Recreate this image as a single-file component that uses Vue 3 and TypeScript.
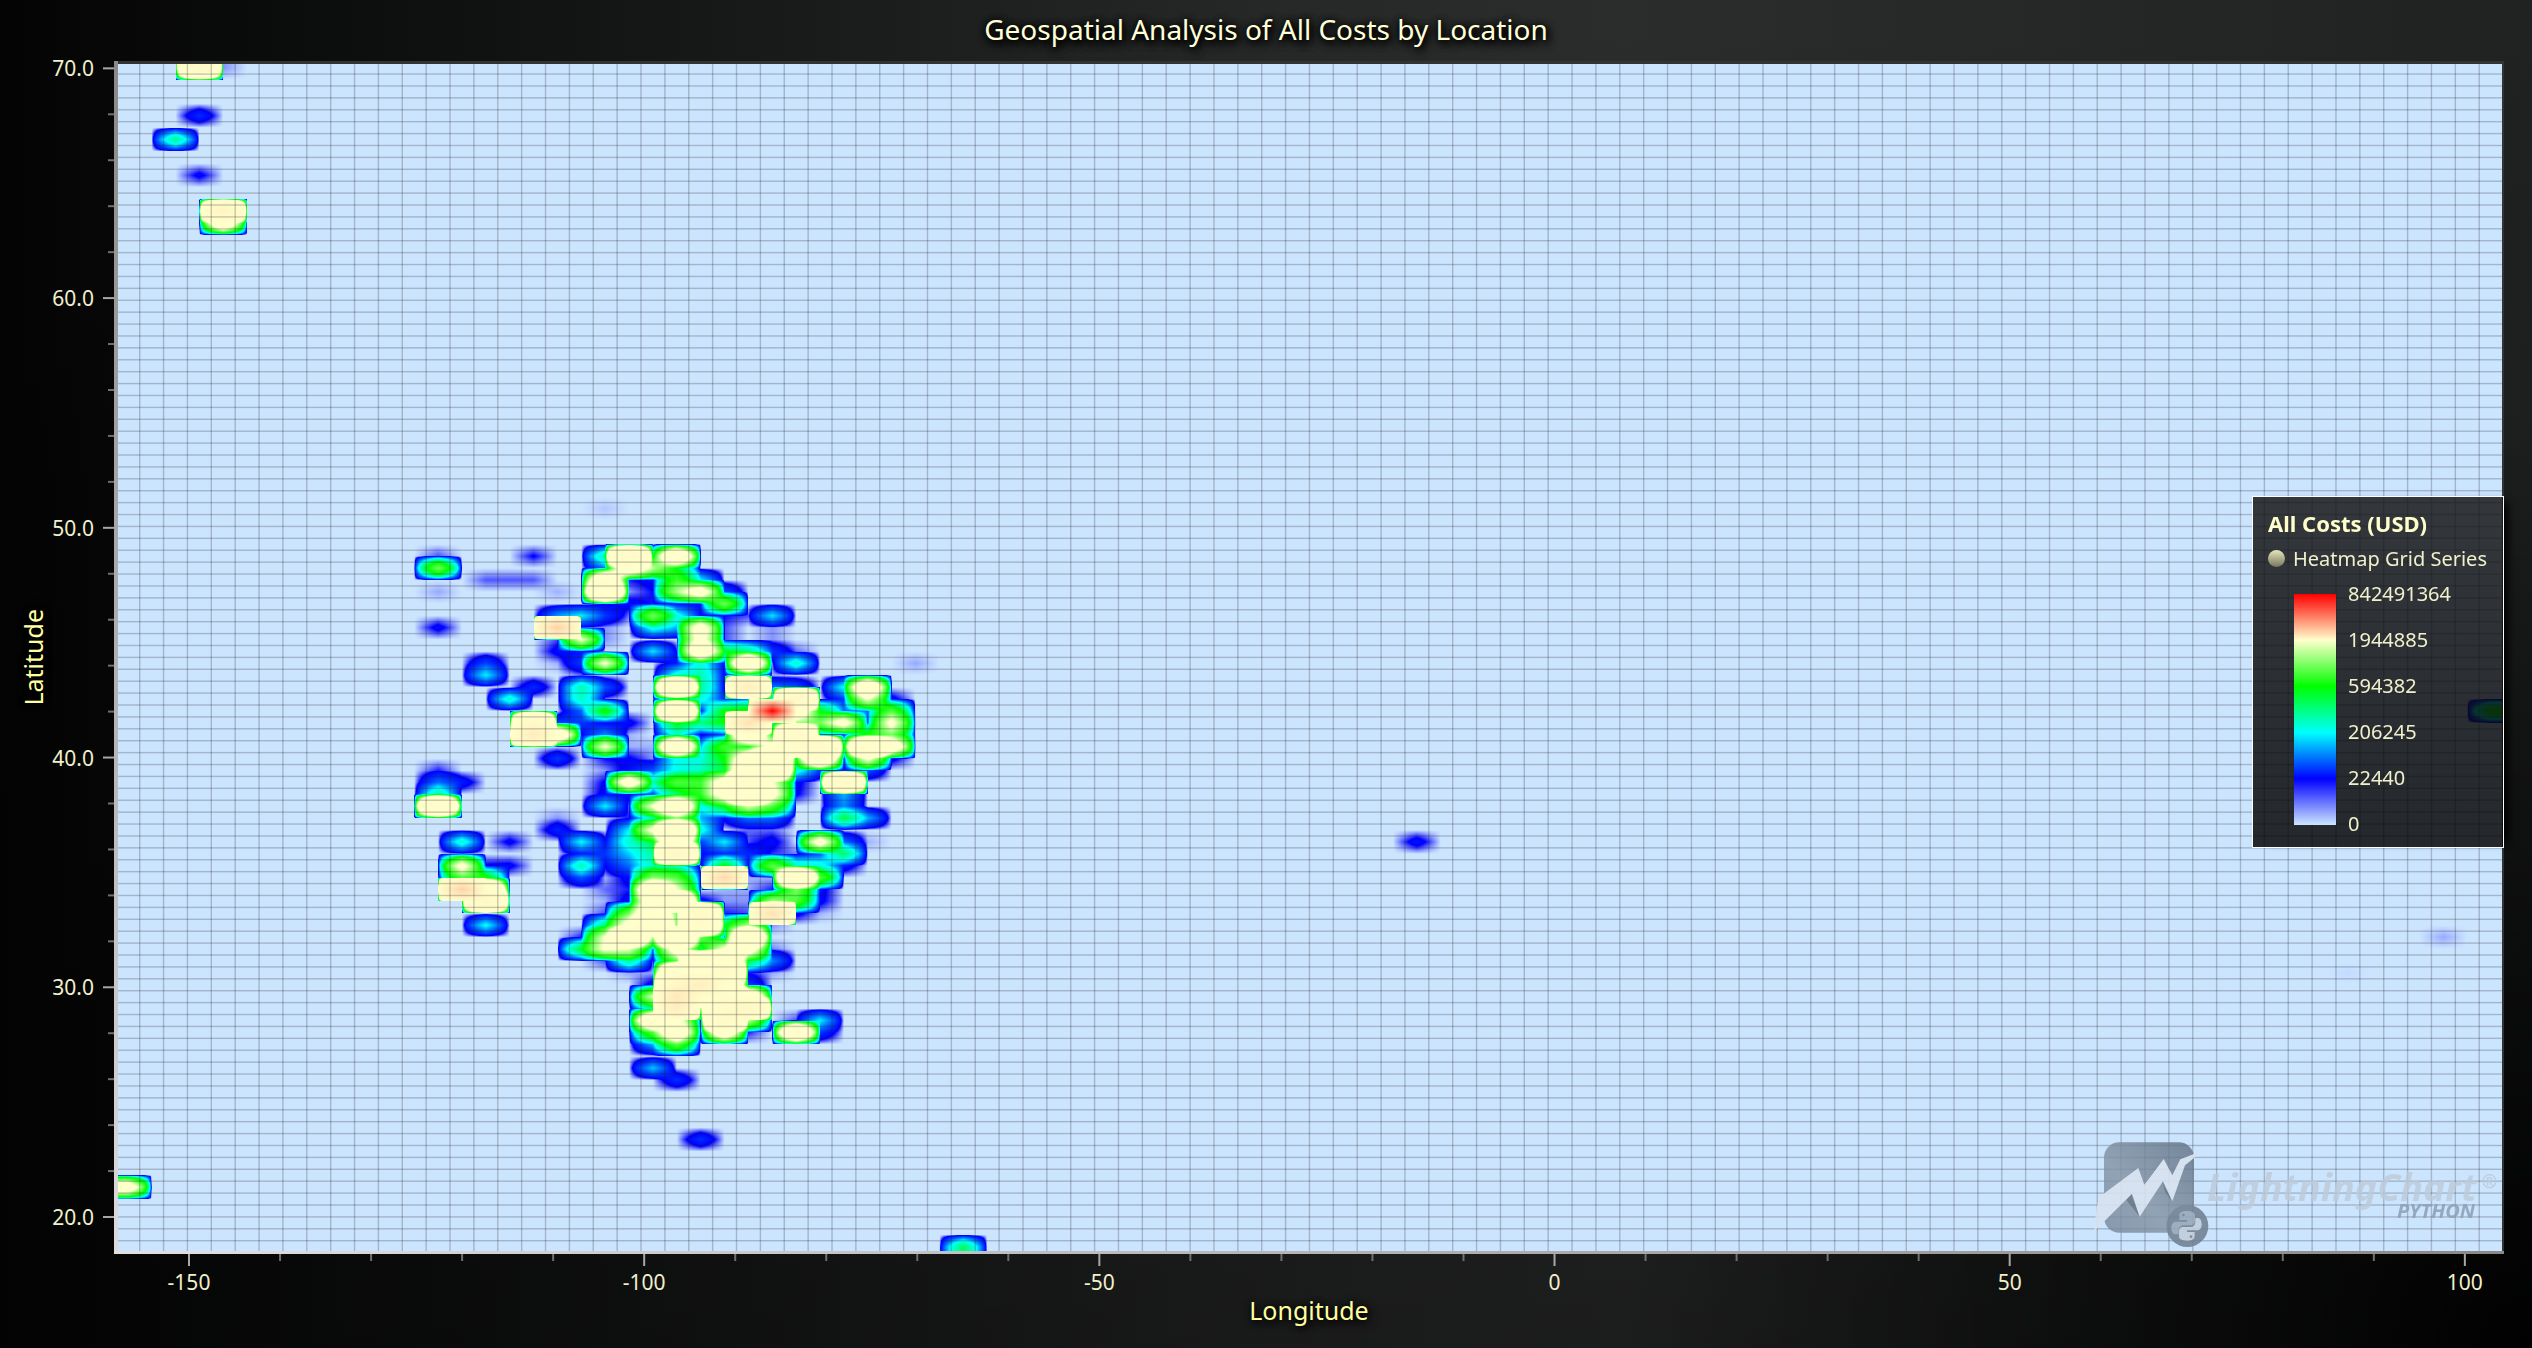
<script setup lang="ts">
import { onBeforeUnmount, onMounted, ref } from 'vue'

type Rgb = [number, number, number]
interface Stop { value: number; label: string; color: Rgb }

// Visible span of both axes and the span covered by the heatmap cells
const axisX = { min: -158.24, max: 104.3 }
const axisY = { min: 18.39, max: 70.32 }
const cellsX = { min: -158.04, max: 104.2 }
const cellsY = { min: 18.45, max: 70.27 }
const COLUMNS = 100
const ROWS = 100

const stops: Stop[] = [
  { value: 0, label: '0', color: [204, 229, 255] },
  { value: 22440, label: '22440', color: [0, 0, 255] },
  { value: 206245, label: '206245', color: [0, 255, 255] },
  { value: 594382, label: '594382', color: [0, 255, 0] },
  { value: 1944885, label: '1944885', color: [255, 255, 204] },
  { value: 842491364, label: '842491364', color: [255, 0, 0] },
]
const legendStops = [...stops].reverse()

// Costs in thousands of dollars: row from the north, then column:cost pairs
const costs: Record<number, string> = {
  0: '3:24000 4:8',
  4: '3:51',
  6: '2:376',
  9: '3:28',
  12: '4:40000',
  13: '4:4400',
  37: '20:3',
  41: '13:15 17:24 20:350 21:21000 22:450 23:5000',
  42: '13:1200 20:100 21:3600 22:1600 23:550',
  43: '15:14 16:14 17:14 20:5000 21:20 22:30 23:900 24:200',
  44: '13:6 18:5 20:10000 21:8 22:22 23:1500 24:2900 25:80',
  45: '20:22 21:30 22:20 23:30 24:30 25:1200',
  46: '18:130 19:200 20:60 21:10 22:1200 23:250 24:30 25:22 26:15 27:190',
  47: '13:30 18:150000 19:15 20:8 22:250 23:150 24:2800 25:15 27:8',
  48: '18:15 19:1950 20:8 24:2500 25:15 27:8',
  49: '18:30 19:35 22:190 23:20 24:3900 25:550 26:400 27:60 28:12',
  50: '15:70 18:5 19:60 20:2050 23:40 24:250 25:20 26:5500 27:10 28:280 33:6',
  51: '15:200 19:10 23:250 24:330 25:20 26:30 27:5',
  52: '17:50 19:320 20:80 23:13000 24:370 25:20 26:60000 27:100 28:80 30:220 31:4500',
  53: '16:270 19:300 20:10 23:100 24:250 25:50 26:100 27:100 28:30000 30:60 31:2000 32:30',
  54: '19:90 20:680 23:14000 24:25 25:600 26:700 27:842491 28:3400 29:600 30:100 31:100 32:1000 99:700',
  55: '17:25000 18:60 19:60 20:25 21:30 23:600 24:400 25:600 26:100000 27:300 28:1400 29:1200 30:2600 31:50 32:2300',
  56: '17:70000 18:4100 19:20 20:120 21:5 23:250 24:15 25:60 26:5000 27:700 28:20000 29:60 30:20 31:700 32:1200',
  57: '20:2050 21:5 22:5 23:6500 24:150 25:900 26:700 27:2500 28:12000 29:20000 30:300 31:11000 32:3700',
  58: '18:60 20:22 21:25 22:8 23:230 24:250 25:600 26:3600 27:10000 28:600 29:6000 30:30 31:2200 32:30',
  59: '13:20 20:8 21:30 22:80 23:230 24:300 25:500 26:5000 27:10000 28:250 29:60 30:20 31:80',
  60: '13:100 14:40 20:25 21:3100 22:300 23:1000 24:900 25:2800 26:15000 27:2000 28:30 30:20000',
  61: '13:350 20:30 21:30 22:60 23:400 24:800 25:2800 26:10000 27:2500 28:25 30:150',
  62: '13:14000 20:200 21:10 22:2000 23:5500 24:200 25:600 26:1800 27:1000 30:120',
  63: '18:8 21:20 22:250 23:1200 24:150 25:30 26:100 27:100 30:500 31:150',
  64: '18:45 21:200 22:2200 23:9000 24:250 26:12 27:12',
  65: '14:270 16:28 19:210 20:30 21:270 22:500 23:5000 24:60 25:200 26:15 27:30 29:2600 30:100 31:5 54:35',
  66: '14:10 19:40 20:60 21:170 22:350 23:30000 24:25 25:50 26:50 27:18 28:10 29:80 30:450',
  67: '14:2400 15:25 16:28 19:320 20:25 21:100 22:300 23:250 25:600 26:20 27:1100 28:300 29:250 30:40',
  68: '14:1000 15:700 19:80 20:5 21:30 22:1300 23:1000 24:30 25:130000 26:5 27:5 28:10000 29:1000',
  69: '14:150000 15:10000 20:12 21:20 22:5000 23:2000 25:5 26:6 27:20 28:1200 29:30',
  70: '15:28000 20:5 21:30 22:3500 23:10000 24:30 25:8 26:8 27:1500 28:1000 29:28',
  71: '20:15 21:1200 22:4000 23:1200 24:20000 25:20 26:15 27:100000 28:30 29:5',
  72: '15:220 20:400 21:2600 22:8000 23:1200 24:15000 25:500 26:1500 27:8',
  73: '19:20 20:2000 21:8000 22:1500 23:10000 24:1200 25:100 26:7500 97:6',
  74: '19:550 20:2100 21:1900 22:80 23:2800 24:300 25:2200 26:3000 27:10',
  75: '20:15 21:350 22:10 23:1000 24:10000 25:8000 26:500 27:120',
  76: '21:6 22:6 23:10000 24:1900 25:20000 26:20 27:6 93:1',
  77: '22:30 23:30000 24:60000 25:8000 26:60',
  78: '22:1800 23:80000 24:10000 25:10000 26:5000',
  79: '22:300 23:60000 24:1000 25:20000 26:30000',
  80: '22:5000 23:2500 24:20 25:20000 26:1600 28:15 29:200',
  81: '22:1000 23:4000 24:20 25:3900 26:20 28:6500 29:60',
  82: '22:150 23:1100',
  84: '22:165',
  85: '23:55',
  90: '24:55',
  94: '0:3250',
  99: '35:460',
}

const grid = new Float64Array(COLUMNS * ROWS)
for (const [row, pairs] of Object.entries(costs)) {
  for (const pair of pairs.split(' ')) {
    const [column, cost] = pair.split(':').map(Number)
    grid[Number(row) * COLUMNS + column] = cost * 1000
  }
}

const range = (from: number, to: number, step: number): number[] =>
  Array.from({ length: Math.floor((to - from) / step) + 1 }, (_, i) => from + i * step)

const xTicks = range(-150, 100, 10).map((value) => ({ value, major: value % 50 === 0 }))
const yTicks = range(20, 70, 2).map((value) => ({ value, major: value % 10 === 0 }))

const shareX = (value: number) => (value - axisX.min) / (axisX.max - axisX.min)
const shareY = (value: number) => (axisY.max - value) / (axisY.max - axisY.min)
const percent = (share: number) => `${share * 100}%`

function writeColor(value: number, out: Uint8ClampedArray, at: number) {
  let i = 1
  while (i < stops.length - 1 && value > stops[i].value) i++
  const low = stops[i - 1]
  const high = stops[i]
  const t = Math.min(1, (value - low.value) / (high.value - low.value))
  for (let c = 0; c < 3; c++) out[at + c] = low.color[c] + (high.color[c] - low.color[c]) * t
  out[at + 3] = 255
}

const clamp = (n: number, max: number) => Math.max(0, Math.min(max, n))

const canvas = ref<HTMLCanvasElement | null>(null)
let observer: ResizeObserver | undefined

function draw() {
  const el = canvas.value
  if (!el) return
  const width = el.clientWidth
  const height = el.clientHeight
  if (!width || !height) return
  el.width = width
  el.height = height
  const ctx = el.getContext('2d')
  if (!ctx) return

  const left = shareX(cellsX.min) * width
  const top = shareY(cellsY.max) * height
  const cellW = (shareX(cellsX.max) * width - left) / COLUMNS
  const cellH = (shareY(cellsY.min) * height - top) / ROWS

  const image = ctx.createImageData(width, height)
  for (let y = 0; y < height; y++) {
    const v = clamp((y + 0.5 - top) / cellH - 0.5, ROWS - 1)
    const r0 = Math.floor(v)
    const r1 = Math.min(r0 + 1, ROWS - 1)
    const fy = v - r0
    for (let x = 0; x < width; x++) {
      const u = clamp((x + 0.5 - left) / cellW - 0.5, COLUMNS - 1)
      const c0 = Math.floor(u)
      const c1 = Math.min(c0 + 1, COLUMNS - 1)
      const fx = u - c0
      const upper = grid[r0 * COLUMNS + c0] * (1 - fx) + grid[r0 * COLUMNS + c1] * fx
      const lower = grid[r1 * COLUMNS + c0] * (1 - fx) + grid[r1 * COLUMNS + c1] * fx
      writeColor(upper * (1 - fy) + lower * fy, image.data, (y * width + x) * 4)
    }
  }
  ctx.putImageData(image, 0, 0)

  ctx.fillStyle = 'rgba(30, 30, 30, 0.24)'
  for (let i = 0; i <= COLUMNS; i++) ctx.fillRect(left + i * cellW - 0.7, 0, 1.4, height)
  for (let j = 0; j <= ROWS; j++) ctx.fillRect(0, top + j * cellH - 0.7, width, 1.4)
}

onMounted(() => {
  draw()
  if (canvas.value) {
    observer = new ResizeObserver(draw)
    observer.observe(canvas.value)
  }
})
onBeforeUnmount(() => observer?.disconnect())
</script>

<template>
  <main class="chart">
    <h1 class="title">Geospatial Analysis of All Costs by Location</h1>

    <div class="y-axis">
      <span class="y-name">Latitude</span>
      <svg class="y-scale" aria-hidden="true">
        <g v-for="tick in yTicks" :key="tick.value">
          <line
            :class="tick.major ? 'major' : 'minor'"
            :x1="tick.major ? 47 : 52"
            x2="58"
            :y1="percent(shareY(tick.value))"
            :y2="percent(shareY(tick.value))"
          />
          <text v-if="tick.major" x="38" dy="8" text-anchor="end" :y="percent(shareY(tick.value))">
            {{ tick.value.toFixed(1) }}
          </text>
        </g>
      </svg>
    </div>

    <section class="plot">
      <canvas ref="canvas" class="heatmap" role="img" aria-label="Heatmap of all costs by location"></canvas>

      <svg class="brand" viewBox="94 60 1230 324" aria-hidden="true">
        <defs>
          <linearGradient id="badge" x1="0" y1="1" x2="1" y2="0">
            <stop offset="0" stop-color="#76879a" />
            <stop offset="0.4" stop-color="#8493a4" />
            <stop offset="1" stop-color="#5f7082" />
          </linearGradient>
        </defs>
        <rect x="133" y="67" width="270" height="271" rx="46" fill="url(#badge)" fill-opacity="0.9" />
        <path d="M234 145 L255 200 L310 118 L262 182 L248 218 Z M215 222 L200 240 L240 290 Z M308 185 L316 215 L338 245 Z" fill="#566678" fill-opacity="0.7" />
        <path
          d="M104 334 C106 300 110 262 118 232 L236 144 L254 194 L312 117 L338 166 L362 118 L432 91 L376 136 L338 244 L310 184 L240 290 L217 221 Z"
          fill="#d7e2ef"
        />
        <circle cx="383" cy="318" r="63" fill="#728294" />
        <path
          d="M381 273 c-16 0 -22 6 -22 14 v13 h23 v5 h-32 c-10 0 -15 8 -15 19 c0 11 5 19 13 19 h9 v-12 c0 -9 7 -15 16 -15 h21 c7 0 12 -5 12 -12 v-17 c0 -9 -9 -14 -25 -14 Z"
          fill="#98a8b9"
        />
        <path
          d="M383 362 c16 0 22 -6 22 -14 v-12 h-23 v-5 h31 c9 0 13 -8 13 -18 c0 -11 -4 -19 -12 -19 h-7 v12 c0 9 -7 15 -15 15 h-22 c-7 0 -12 5 -12 12 v16 c0 9 9 13 25 13 Z"
          fill="#c1cdd9"
        />
        <circle cx="371" cy="285" r="4" fill="#728294" />
        <circle cx="394" cy="350" r="4" fill="#728294" />
        <text class="brand-name" x="441" y="243">LightningChart</text>
        <text class="brand-mark" x="1266" y="204">®</text>
        <text class="brand-edition" x="1246" y="294" text-anchor="end">PYTHON</text>
      </svg>

      <aside class="legend">
        <h2 class="legend-title">All Costs (USD)</h2>
        <p class="series"><span class="dot"></span>Heatmap Grid Series</p>
        <div class="scale">
          <div class="ramp"></div>
          <ul class="values">
            <li v-for="stop in legendStops" :key="stop.value">{{ stop.label }}</li>
          </ul>
        </div>
      </aside>
    </section>

    <div class="x-axis">
      <svg class="x-scale" aria-hidden="true">
        <g v-for="tick in xTicks" :key="tick.value">
          <line
            :class="tick.major ? 'major' : 'minor'"
            y1="0"
            :y2="tick.major ? 12 : 7"
            :x1="percent(shareX(tick.value))"
            :x2="percent(shareX(tick.value))"
          />
          <text v-if="tick.major" y="36" text-anchor="middle" :x="percent(shareX(tick.value))">
            {{ tick.value }}
          </text>
        </g>
      </svg>
      <span class="x-name">Longitude</span>
    </div>
  </main>
</template>

<style>
body {
  margin: 0;
  background: #000;
}
</style>

<style scoped>
.chart {
  display: grid;
  grid-template-columns: 114px minmax(0, 1fr) 28px;
  grid-template-rows: 61px minmax(0, 1fr) 94px;
  height: 100vh;
  min-height: 500px;
  box-sizing: border-box;
  font-family: "Noto Sans", "Open Sans", sans-serif;
  font-size: 21px;
  color: #f0f0cc;
  background:
    radial-gradient(ellipse 36% 68% at 100% 100%, rgba(0, 0, 0, 0.95), transparent),
    linear-gradient(rgba(0, 0, 0, 0), rgba(0, 0, 0, 0.35)),
    linear-gradient(90deg, #040404 0%, #0e0f0f 16%, #262727 50%, #2b2c2c 64%, #202222 100%);
}

.title {
  grid-column: 1 / -1;
  margin: 0;
  line-height: 58px;
  font-size: 28px;
  font-weight: 400;
  text-align: center;
  color: #ffffd8;
  text-shadow: 0 0 6px #000, 2px 3px 8px #000, 2px 3px 8px #000;
}

.y-axis {
  display: flex;
  align-items: center;
}

.y-name {
  width: 56px;
  box-sizing: border-box;
  padding-right: 10px;
  line-height: 46px;
  font-size: 25px;
  text-align: center;
  writing-mode: vertical-rl;
  transform: rotate(180deg);
  color: #ffffa0;
  text-shadow: 0 0 6px #000, 2px 3px 8px #000;
}

.y-scale {
  width: 58px;
  height: 100%;
  overflow: visible;
}

.y-scale text,
.x-scale text {
  fill: #f0f0cc;
}

.major {
  stroke: #a8a8a8;
  stroke-width: 2;
}

.minor {
  stroke: #707070;
  stroke-width: 2;
}

.plot {
  position: relative;
  min-width: 0;
  min-height: 0;
}

.heatmap {
  display: block;
  width: 100%;
  height: 100%;
}

.plot::after {
  content: "";
  position: absolute;
  inset: 0;
  pointer-events: none;
  background:
    linear-gradient(90deg, #e0e0e0, #bdbdbd 40%, #8c8888) bottom / 100% 3px no-repeat,
    linear-gradient(180deg, #8c8888, #b8b8b8 60%, #dcdcdc) left / 4px 100% no-repeat,
    linear-gradient(#333, #333) top / 100% 3px no-repeat,
    linear-gradient(#333, #333) right / 2px 100% no-repeat;
}

.brand {
  position: absolute;
  right: 3px;
  bottom: 6px;
  width: 410px;
  height: 108px;
  opacity: 0.9;
}

.brand text {
  font-weight: 700;
  font-style: italic;
}

.brand-name {
  font-size: 113px;
  fill: #bccad9;
  fill-opacity: 0.9;
}

.brand-mark {
  font-size: 56px;
  fill: #bccad9;
}

.brand-edition {
  font-size: 60px;
  fill: #8fa1b5;
}

.legend {
  position: absolute;
  z-index: 1;
  right: 0;
  top: calc(50% - 162px);
  width: 252px;
  height: 352px;
  box-sizing: border-box;
  padding: 12px 14px 12px 15px;
  border: 1px solid #fff;
  background: linear-gradient(rgba(20, 20, 20, 0.83), rgba(2, 2, 2, 0.83));
  box-shadow: 10px 0 8px -6px #000;
}

.legend-title {
  margin: 0;
  line-height: 28px;
  font-size: 22px;
  font-weight: 700;
  white-space: nowrap;
  color: #ffffcc;
}

.series {
  display: flex;
  align-items: center;
  gap: 8px;
  margin: 5px 0 8px;
  line-height: 34px;
  font-size: 20px;
  white-space: nowrap;
}

.dot {
  flex: none;
  width: 17px;
  height: 17px;
  border-radius: 50%;
  background: linear-gradient(#e6e6bc, #a3a383 60%, #77775f);
}

.scale {
  display: flex;
  gap: 12px;
  height: 251px;
  padding-left: 26px;
}

.ramp {
  width: 42px;
  margin: 10px 0;
  background: linear-gradient(#f00, #ffc 20%, #0f0 40%, #0ff 60%, #00f 80%, #cce5ff);
}

.values {
  display: flex;
  flex-direction: column;
  justify-content: space-between;
  margin: 0;
  padding: 0;
  list-style: none;
  line-height: 20px;
  font-size: 20px;
}

.x-axis {
  grid-column: 2;
  display: flex;
  flex-direction: column;
  align-items: center;
}

.x-scale {
  width: 100%;
  height: 40px;
  overflow: visible;
}

.x-name {
  line-height: 32px;
  font-size: 25px;
  color: #ffffa0;
  text-shadow: 0 0 6px #000, 2px 3px 8px #000;
}
</style>
